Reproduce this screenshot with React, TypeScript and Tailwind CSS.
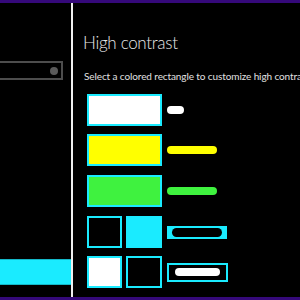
import React from "react";

export default function App() {
  const font = { fontFamily: 'Lato, "Open Sans", sans-serif' };
  return (
    <div className="w-[300px] h-[300px] bg-black flex flex-col overflow-hidden" style={font}>
      <div className="h-[3px] bg-[#35097a] shrink-0" />
      <div className="flex flex-row h-[294px] shrink-0">
        {/* left panel */}
        <div className="w-[71px] shrink-0 flex flex-col overflow-hidden">
          <div className="mt-[58px] ml-[-10px] w-[73px] h-[19px] border-2 border-[#4d4d4d] flex items-center justify-end pr-[3px]">
            <div className="w-[8px] h-[8px] rounded-full bg-[#5a5a5a]" />
          </div>
          <div className="mt-[179px] h-[26px] bg-[#1aebff] border-y border-[#14b8c8]" />
        </div>
        <div className="w-[2px] shrink-0 bg-[#f0f0f0]" />
        {/* right panel */}
        <div className="flex-1 overflow-hidden flex flex-col">
          <div className="pl-[10px] mt-[28px] text-[17px] leading-[24px] tracking-[-0.3px] font-light text-[#e8e8e8] whitespace-nowrap">
            High contrast
          </div>
          <div className="pl-[11px] mt-[14px] text-[10px] leading-[14px] tracking-[-0.1px] text-[#e0e0e0] whitespace-nowrap">
            Select a colored rectangle to customize high contrast colors
          </div>
          <div className="pl-[14px] mt-[11px] flex flex-col">
            {/* row1 */}
            <div className="flex flex-row items-center h-[32px] gap-[5px]">
              <div className="w-[75px] h-[32px] bg-white border-2 border-[#1aebff]" />
              <div className="w-[17px] h-[8px] rounded-full bg-white" />
            </div>
            {/* row2 */}
            <div className="mt-[8px] flex flex-row items-center h-[32px] gap-[5px]">
              <div className="w-[75px] h-[32px] bg-[#ffff00] border-2 border-[#1aebff]" />
              <div className="w-[50px] h-[8px] rounded-full bg-[#ffff00]" />
            </div>
            {/* row3 */}
            <div className="mt-[9px] flex flex-row items-center h-[32px] gap-[5px]">
              <div className="w-[75px] h-[32px] bg-[#3ff23f] border-2 border-[#1aebff]" />
              <div className="w-[50px] h-[8px] rounded-full bg-[#3ff23f]" />
            </div>
            {/* row4 */}
            <div className="mt-[9px] flex flex-row items-center h-[32px] gap-[5px]">
              <div className="flex flex-row gap-[4px]">
                <div className="w-[35px] h-[32px] bg-black border-2 border-[#1aebff]" />
                <div className="w-[36px] h-[32px] bg-[#1aebff]" />
              </div>
              <div className="w-[60px] h-[13px] bg-[#1aebff] flex items-center justify-center">
                <div className="w-[50px] h-[9px] rounded-full bg-black" />
              </div>
            </div>
            {/* row5 */}
            <div className="mt-[8px] flex flex-row items-center h-[32px] gap-[5px]">
              <div className="flex flex-row gap-[4px]">
                <div className="w-[35px] h-[32px] bg-white border-2 border-[#1aebff]" />
                <div className="w-[36px] h-[32px] bg-black border-2 border-[#1aebff]" />
              </div>
              <div className="w-[61px] h-[19px] bg-black border-2 border-[#1aebff] flex items-center justify-center">
                <div className="w-[45px] h-[8px] rounded-full bg-white" />
              </div>
            </div>
          </div>
        </div>
      </div>
      <div className="h-[3px] bg-[#35097a] shrink-0" />
    </div>
  );
}
